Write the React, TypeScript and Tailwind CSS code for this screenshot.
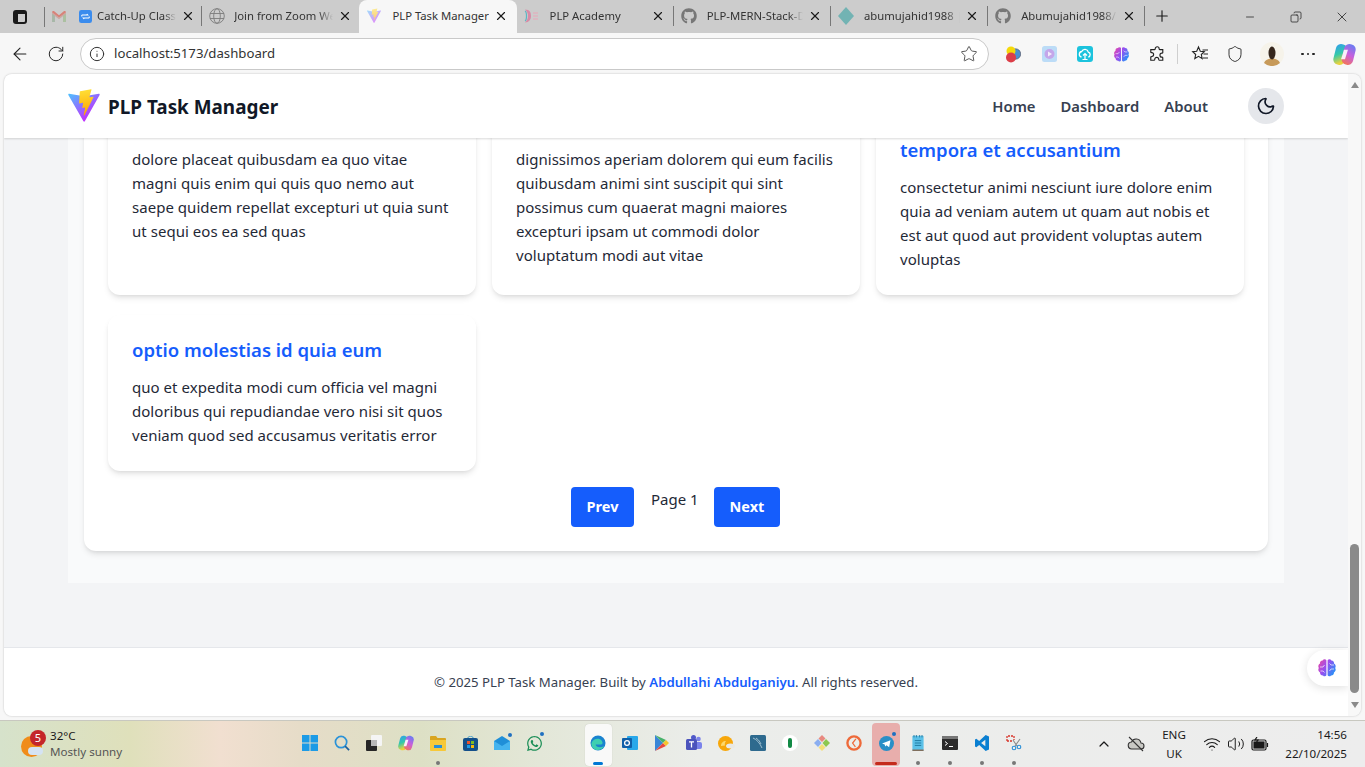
import { ArrowLeft, ChevronUp, Copy, Info, Minus, Moon, Plus, RotateCw, Shield, Star, Volume2, Wifi, X } from 'lucide-react';
import type { ReactNode } from 'react';
import { FaGithub, FaWhatsapp } from 'react-icons/fa';

const tabs = [
  { title: 'Catch-Up Class', icon: 'zoom' },
  { title: 'Join from Zoom Web', icon: 'globe' },
  { title: 'PLP Task Manager', icon: 'vite', active: true },
  { title: 'PLP Academy', icon: 'plp' },
  { title: 'PLP-MERN-Stack-Dev', icon: 'github' },
  { title: 'abumujahid1988 | Dev', icon: 'diamond' },
  { title: 'Abumujahid1988/PLP', icon: 'github' },
];

const posts = [
  {
    title: 'magnam facilis autem',
    body: 'dolore placeat quibusdam ea quo vitae magni quis enim qui quis quo nemo aut saepe quidem repellat excepturi ut quia sunt ut sequi eos ea sed quas',
  },
  {
    title: 'dolorem dolore est ipsam',
    body: 'dignissimos aperiam dolorem qui eum facilis quibusdam animi sint suscipit qui sint possimus cum quaerat magni maiores excepturi ipsam ut commodi dolor voluptatum modi aut vitae',
  },
  {
    title: 'nesciunt iure omnis dolorem tempora et accusantium',
    body: 'consectetur animi nesciunt iure dolore enim quia ad veniam autem ut quam aut nobis et est aut quod aut provident voluptas autem voluptas',
  },
  {
    title: 'optio molestias id quia eum',
    body: 'quo et expedita modi cum officia vel magni doloribus qui repudiandae vero nisi sit quos veniam quod sed accusamus veritatis error',
  },
];

function ViteLogo({ size }: { size: number }) {
  return (
    <svg width={size} height={size} viewBox="0 0 32 32" className="shrink-0">
      <defs>
        <linearGradient id="viteA" x1="6" y1="33" x2="235" y2="344" gradientUnits="userSpaceOnUse" gradientTransform="scale(0.078)">
          <stop stopColor="#41D1FF" />
          <stop offset="1" stopColor="#BD34FE" />
        </linearGradient>
        <linearGradient id="viteB" x1="194" y1="8" x2="236" y2="292" gradientUnits="userSpaceOnUse" gradientTransform="scale(0.078)">
          <stop stopColor="#FFEA83" />
          <stop offset="0.08" stopColor="#FFDD35" />
          <stop offset="1" stopColor="#FFA800" />
        </linearGradient>
      </defs>
      <path
        fill="url(#viteA)"
        d="M29.8836 6.146L16.7418 29.6457c-.2714.4851-.9684.488-1.2439.0052L2.0956 6.1482c-.3-.5262.1499-1.1635.7461-1.057l13.156 2.3516a.7.7 0 0 0 .2549-.0005l12.8806-2.3477c.5942-.1083 1.0463.5241.7504 1.0512Z"
      />
      <path
        fill="url(#viteB)"
        d="M22.2644 1.0085L12.5396 2.9139a.3571.3571 0 0 0-.2879.3294l-.5982 10.1039a.3571.3571 0 0 0 .4365.3689l2.7076-.6248c.2533-.0585.4823.1647.4302.4196l-.8045 3.9393c-.0541.265.1947.4918.4536.4132l1.6724-.5081c.2593-.0787.5084.1486.4536.4138l-1.2784 6.1877c-.08.387.4348.598.6495.2662l.1434-.2215 7.925-15.8148c.1327-.2648-.0962-.5667-.387-.5106l-2.7871.5379c-.2619.0505-.4848-.1934-.4109-.4497l1.8191-6.3062c.074-.2567-.1497-.5009-.4121-.4494Z"
      />
    </svg>
  );
}

function BrainIcon({ size }: { size: number }) {
  return (
    <svg width={size} height={size} viewBox="0 0 20 20" className="shrink-0">
      <defs>
        <linearGradient id="brainG" x1="0" y1="0" x2="1" y2="0.6">
          <stop stopColor="#f0489f" />
          <stop offset="0.5" stopColor="#9a4df0" />
          <stop offset="1" stopColor="#2f8df7" />
        </linearGradient>
      </defs>
      <path
        fill="url(#brainG)"
        d="M9.4 2.2C8.6 1 6.4 1 5.600 2.400 3.800 2.400 2.600 4 3 5.600 1.400 6.400.8 8.600 1.800 10c-1 1.600-.4 3.600 1.200 4.400 0 1.800 1.400 3.200 3 3 .8 1.200 2.800 1.200 3.400-.2V2.200Zm1.200 0c.8-1.200 3-1.200 3.800.2 1.800 0 3 1.600 2.600 3.200 1.600.8 2.200 3 1.200 4.400 1 1.600.4 3.600-1.200 4.400 0 1.800-1.400 3.200-3 3-.8 1.200-2.800 1.200-3.400-.2V2.200Z"
      />
      <path
        d="M3 9h3l1.500-2M3.500 13H6l1.500 1.500M12.500 5.500 14 7h3M17 11h-3l-1.500 2"
        fill="none"
        stroke="#fff"
        strokeWidth="0.9"
        opacity="0.75"
      />
    </svg>
  );
}

function CopilotIcon({ size, id }: { size: number; id: string }) {
  return (
    <svg width={size} height={size} viewBox="0 0 22 22" className="shrink-0">
      <defs>
        <linearGradient id={`${id}A`} x1="0" y1="0" x2="0.4" y2="1">
          <stop stopColor="#2f9af2" />
          <stop offset="0.55" stopColor="#35c9a8" />
          <stop offset="1" stopColor="#e9d23d" />
        </linearGradient>
        <linearGradient id={`${id}B`} x1="0.6" y1="0" x2="0.4" y2="1">
          <stop stopColor="#6a7cf2" />
          <stop offset="0.5" stopColor="#c95fdc" />
          <stop offset="1" stopColor="#f2765a" />
        </linearGradient>
      </defs>
      <rect x="1.500" y="1" width="11" height="20" rx="5" fill={`url(#${id}A)`} transform="rotate(14 7 11)" />
      <rect x="9.500" y="1" width="11" height="20" rx="5" fill={`url(#${id}B)`} transform="rotate(14 15 11)" />
      <path d="M10.500 6.500h3.800l-2.800 9H7.700Z" fill="#fff" opacity="0.9" />
    </svg>
  );
}

function TabIcon({ kind }: { kind: string }) {
  if (kind === 'zoom') {
    return (
      <svg width="13" height="13" viewBox="0 0 14 14" className="shrink-0">
        <rect width="14" height="14" rx="2.5" fill="#3b8ced" />
        <path d="M3 5.500h6.500l-1-1.200M11 8.500H4.500l1 1.200M3 5.500V7M11 8.500V7" fill="none" stroke="#fff" strokeWidth="1.100" />
      </svg>
    );
  }
  if (kind === 'globe') {
    return (
      <svg width="16" height="16" viewBox="0 0 16 16" fill="none" stroke="#7c7c7c" strokeWidth="0.9" className="shrink-0">
        <circle cx="8" cy="8" r="7.300" />
        <ellipse cx="8" cy="8" rx="3.300" ry="7.300" />
        <path d="M1 5.500h14M1 10.500h14" />
      </svg>
    );
  }
  if (kind === 'vite') {
    return (
      <span className="shrink-0 opacity-50">
        <ViteLogo size={16} />
      </span>
    );
  }
  if (kind === 'plp') {
    return (
      <svg width="16" height="16" viewBox="0 0 16 16" className="shrink-0">
        <path d="M1 1.500c5 0 6 3 6 6.500s-2 6.500-6 6.500c2-2 3-4 3-6.500S3 3.500 1 1.500Z" fill="#d98aa6" />
        <path d="M1 3c2 1 2 9 0 10" fill="none" stroke="#5cb6c4" strokeWidth="1.200" />
        <path d="M9 5h5M9 8h5M9 11h5" stroke="#e9a6b8" strokeWidth="1.200" />
      </svg>
    );
  }
  if (kind === 'diamond') {
    return (
      <svg width="16" height="18" viewBox="0 0 16 18" className="shrink-0">
        <path d="M8 0l8 9-8 9-8-9Z" fill="#72b3b3" />
      </svg>
    );
  }
  return <FaGithub className="w-4 h-4 shrink-0 text-[#777777]" />;
}

function GmailIcon() {
  return (
    <svg width="14" height="11" viewBox="0 0 15 12" className="shrink-0">
      <path d="M0 1.500 7.500 7 15 1.500V12h-3V5.500L7.500 9 3 5.500V12H0Z" fill="#c9a8a4" />
      <path d="M0 1.500C0 .2 1.300-.3 2.300.4L7.500 4.500 12.700.4C13.700-.3 15 .2 15 1.500L7.500 7Z" fill="#d88278" />
      <path d="M0 3v9h3V5.500Z" fill="#a5b8a8" />
      <path d="M15 3v9h-3V5.500Z" fill="#a9c2a0" />
    </svg>
  );
}

function TabStrip() {
  return (
    <div className="h-[33px] bg-[#cccccc] flex items-end shrink-0">
      <div className="w-[45px] h-[33px] flex items-center shrink-0">
        <div className="ml-[13px] w-[14px] h-[14px] border-2 border-[#1a1a1a] rounded-[3px] flex flex-col">
          <div className="h-[2px] bg-[#1a1a1a]" />
          <div className="w-[3px] flex-1 bg-[#1a1a1a]" />
        </div>
        <div className="ml-[17px] w-px h-[20px] bg-[#777777]" />
      </div>
      {tabs.map((tab, i) => {
        const nextActive = tabs[i + 1]?.active;
        return (
          <div
            key={tab.title}
            className={`relative w-[157.200px] h-[33px] pb-px flex items-center shrink-0 ${
              tab.active ? 'bg-[#f7f7f7] rounded-t-[8px]' : ''
            }`}
          >
            <div className={`flex items-center pl-[7px] ${i === 0 ? 'gap-[13px]' : ''}`}>
              {i === 0 && <GmailIcon />}
              <TabIcon kind={tab.icon} />
            </div>
            <div
              className={`${i === 0 ? 'ml-[5px]' : i === 1 ? 'ml-[9px]' : 'ml-[10px]'} flex-1 overflow-hidden whitespace-nowrap text-[11.3px] leading-[16px] text-[#333333] ${
                tab.active ? '' : '[mask-image:linear-gradient(to_right,black_85%,transparent)]'
              }`}
            >
              {tab.title}
            </div>
            <X className={`w-[14px] h-[14px] ml-[5px] shrink-0 text-[#1a1a1a] ${i < 2 ? 'mr-[7px]' : 'mr-[9px]'}`} strokeWidth={2} />
            {!tab.active && !nextActive && <div className="absolute right-0 top-[6px] w-px h-[20px] bg-[#777777]" />}
          </div>
        );
      })}
      <div className="h-[33px] pb-px flex items-center ml-[8px]">
        <Plus className="w-[18px] h-[18px] text-[#1a1a1a]" strokeWidth={1.5} />
      </div>
      <div className="ml-auto h-[33px] flex items-center">
        <div className="w-[46px] flex justify-center">
          <Minus className="w-[12px] h-[12px] text-[#222222]" strokeWidth={1.5} />
        </div>
        <div className="w-[46px] flex justify-center">
          <Copy className="w-[12px] h-[12px] text-[#222222] -scale-x-100" strokeWidth={1.5} />
        </div>
        <div className="w-[46px] flex justify-center">
          <X className="w-[16px] h-[16px] text-[#222222]" strokeWidth={1.2} />
        </div>
      </div>
    </div>
  );
}

function ExtensionIcons() {
  return (
    <div className="flex items-center ml-[6px] shrink-0">
      <div className="w-9 flex justify-center">
        <svg width="16" height="17" viewBox="0 0 16 17">
          <circle cx="10.500" cy="8" r="5.200" fill="#4a90d0" stroke="#5a5a6a" strokeWidth="0.700" />
          <circle cx="6" cy="5" r="4.500" fill="#f5d90a" />
          <circle cx="6" cy="11.500" r="5" fill="#dc3e48" />
        </svg>
      </div>
      <div className="w-9 flex justify-center">
        <svg width="15" height="16" viewBox="0 0 15 16">
          <rect width="15" height="16" rx="2.500" fill="#bcdcf7" />
          <circle cx="7.500" cy="8" r="5" fill="#c4a6ea" />
          <path d="M6 5.500v5l4-2.500Z" fill="#f3ecfb" />
        </svg>
      </div>
      <div className="w-9 flex justify-center">
        <svg width="16" height="16" viewBox="0 0 16 16">
          <rect width="16" height="16" rx="3" fill="#1cc3dd" />
          <path d="M4.500 11a2.800 2.800 0 0 1 .2-5.500 3.500 3.500 0 0 1 6.600.5 2.600 2.600 0 0 1 0 5" fill="none" stroke="#fff" strokeWidth="1.300" />
          <path d="M8 13.500V7.500M6 9.500l2-2 2 2M5.500 13.500h5" fill="none" stroke="#fff" strokeWidth="1.200" />
        </svg>
      </div>
      <div className="w-9 flex justify-center">
        <BrainIcon size={17} />
      </div>
      <div className="w-9 flex justify-center">
        <svg width="16" height="16" viewBox="0 0 18 18" fill="none" stroke="#222222" strokeWidth="1.300">
          <path d="M7 3a2.200 2.200 0 0 1 4.400 0c0 .6 0 1 .6 1h3.500v3.500c0 .6-.4.600-1 .6a2.200 2.200 0 0 0 0 4.400c.6 0 1 0 1 .6V16h-4c-.6 0-.6-.4-.6-1a2.200 2.200 0 0 0-4.400 0c0 .6 0 1-.6 1H2v-3.500c0-.6.4-.6 1-.6a2.200 2.200 0 0 0 0-4.400c-.6 0-1 0-1-.6V4h4.400c.6 0 .6-.4.6-1Z" />
        </svg>
      </div>
      <div className="w-px h-[20px] bg-[#cfcfcf] mx-[2px]" />
      <div className="w-[40px] flex justify-center">
        <svg width="18" height="18" viewBox="0 0 18 18" fill="none" stroke="#222222" strokeWidth="1.100">
          <path d="M7.500 2 9.300 6.300l4 .4-3 2.800 .9 4.200-3.700-2.300-3.700 2.300 .9-4.200-3-2.800 4-.4Z" />
          <path d="M11.500 5H17M12.500 9H17M12 13h5" />
        </svg>
      </div>
      <div className="w-[30px] flex justify-center">
        <Shield className="w-[18px] h-[18px] text-[#222222]" strokeWidth={1.2} />
      </div>
      <div className="w-[44px] flex justify-center">
        <svg width="24" height="24" viewBox="0 0 24 24">
          <circle cx="12" cy="12" r="12" fill="#f6f3ea" />
          <path d="M4 21c1-3 4-4.500 8-4.500s7 1.500 8 4.500a12 12 0 0 1-16 0Z" fill="#c79a5a" />
          <ellipse cx="12" cy="11" rx="3.500" ry="6.500" fill="#35261c" />
        </svg>
      </div>
      <div className="w-[28px] flex justify-center gap-[3px]">
        <span className="w-[2.500px] h-[2.500px] rounded-full bg-[#222222]" />
        <span className="w-[2.500px] h-[2.500px] rounded-full bg-[#222222]" />
        <span className="w-[2.500px] h-[2.500px] rounded-full bg-[#222222]" />
      </div>
      <div className="w-[45px] flex justify-center">
        <CopilotIcon size={23} id="copTop" />
      </div>
    </div>
  );
}

function Toolbar() {
  return (
    <div className="h-[41px] pt-px bg-[#f7f7f7] flex items-center shrink-0">
      <div className="w-[40px] shrink-0 flex justify-center">
        <ArrowLeft className="w-[20px] h-[20px] text-[#222222]" strokeWidth={1.3} />
      </div>
      <div className="w-[32px] shrink-0 flex justify-center">
        <RotateCw className="w-[18px] h-[18px] text-[#222222]" strokeWidth={1.3} />
      </div>
      <div className="ml-[8px] w-[909px] shrink-0 h-[32px] rounded-full bg-white border border-[#c9c9c9] flex items-center pl-[8px] pr-[10px]">
        <Info className="w-[16px] h-[16px] text-[#333333]" strokeWidth={1.5} />
        <span className="ml-[9px] text-[13.2px] text-[#333333]">localhost:5173/dashboard</span>
        <Star className="ml-auto w-[18px] h-[18px] text-[#333333]" strokeWidth={1.1} />
      </div>
      <ExtensionIcons />
    </div>
  );
}

function Navbar() {
  return (
    <header className="absolute top-0 left-0 right-0 h-16 bg-white shadow-[0_1px_2px_rgba(0,0,0,0.15)] z-10">
      <div className="max-w-7xl mx-auto h-full px-8 flex items-center">
        <div className="-ml-[2px]">
          <ViteLogo size={36} />
        </div>
        <span className="ml-[6px] mt-[2px] text-[18.900px] font-bold text-[#111827]">PLP Task Manager</span>
        <nav className="ml-auto flex items-center gap-[25px] text-[14.800px] font-semibold text-[#374151]">
          <span className="mt-[1px]">Home</span>
          <span className="mt-[1px]">Dashboard</span>
          <span className="mt-[1px]">About</span>
          <button className="ml-[15px] w-9 h-9 rounded-full bg-[#e5e7eb] flex items-center justify-center">
            <Moon className="w-5 h-5 text-[#111827]" strokeWidth={2} />
          </button>
        </nav>
      </div>
    </header>
  );
}

function PostCard({ title, body }: { title: string; body: string }) {
  return (
    <div className="bg-white rounded-xl shadow-md pt-[21px] pb-6 px-6">
      <h3 className="text-[18.500px] leading-7 font-semibold text-[#155dfc] mb-[11px]">{title}</h3>
      <p className="text-[15px] tracking-[0.035px] leading-6 text-[#1f2937]">{body}</p>
    </div>
  );
}

function Page() {
  return (
    <div className="relative flex-1 mx-[4px] rounded-lg bg-[#f3f4f6] overflow-hidden flex shadow-[0_0_2px_rgba(0,0,0,0.25)]">
      <div className="relative flex-1 overflow-hidden flex flex-col">
        <Navbar />
        <main className="max-w-7xl w-full mx-auto px-8 shrink-0">
          <div className="bg-[#f9fafb] px-4 pb-8">
            <div className="bg-white rounded-xl px-6 pb-6 pt-[13px] shadow-md">
              <div className="grid grid-cols-3 gap-x-4 gap-y-5">
                {posts.map((post) => (
                  <PostCard key={post.title} {...post} />
                ))}
              </div>
              <div className="flex justify-center items-start gap-4 mt-4 pr-px">
                <button className="h-10 w-[63px] rounded bg-[#155dfc] text-white font-bold text-[14.500px]">Prev</button>
                <span className="ml-px w-[47px] whitespace-nowrap text-[15px] leading-6 text-[#1f2937]">Page 1</span>
                <button className="h-10 w-[66px] rounded bg-[#155dfc] text-white font-bold text-[14.500px]">Next</button>
              </div>
            </div>
          </div>
        </main>
        <footer className="mt-16 flex-1 pt-[2px] bg-white border-t border-[#e5e7eb] flex items-center justify-center text-[13.200px] text-[#374151]">
          <span>
            © 2025 PLP Task Manager. Built by <span className="font-semibold text-[#155dfc]">Abdullahi Abdulganiyu</span>. All rights reserved.
          </span>
        </footer>
        <div className="absolute right-0 bottom-[30px] w-[41px] h-[36px] bg-white rounded-l-full shadow-[0_2px_10px_rgba(0,0,0,0.12)] flex items-center pl-[10px]">
          <BrainIcon size={20} />
        </div>
      </div>
      <div className="w-[13px] bg-[#f8f8f8] flex flex-col items-center py-[8px] shrink-0">
        <div className="w-0 h-0 border-x-[4px] border-x-transparent border-b-[6px] border-b-[#8a8a8a]" />
        <div className="flex-1 flex flex-col justify-end w-full items-center pb-[9px]">
          <div className="w-[9px] h-[149px] rounded-full bg-[#8a8a8a]" />
        </div>
        <div className="w-0 h-0 border-x-[4px] border-x-transparent border-t-[6px] border-t-[#8a8a8a]" />
      </div>
    </div>
  );
}

function TaskIcon({ children, dot, active }: { children: ReactNode; dot?: boolean; active?: boolean }) {
  return (
    <div className="relative w-8 h-[45px] flex items-center justify-center">
      {active && <span className="absolute left-[2px] right-[2px] top-[1px] bottom-[1px] bg-[#e8aeac] rounded-[4px]" />}
      <span className="relative flex -mt-[2px]">{children}</span>
      {dot && <span className="absolute bottom-[2px] left-1/2 -ml-[2px] w-1 h-1 rounded-full bg-[#777777]" />}
      {active && <span className="absolute bottom-[2px] left-[5px] right-[5px] h-[3px] rounded-full bg-[#c42b1c]" />}
    </div>
  );
}

function Taskbar() {
  return (
    <div className="h-[47px] mt-[4px] shrink-0 border-t border-[#c8c8c0] flex items-center bg-[linear-gradient(to_right,#d6e2cb_0,#dfe0bb_130px,#f1dfd0_220px,#e6dcc8_300px,#dde0c5_420px,#e3e7d8_540px,#ebedea_700px,#ededed_100%)]">
      <div className="w-[294px] flex items-center pl-[21px] shrink-0">
        <div className="relative w-[24px] h-[28px] mr-[5px]">
          <div className="absolute left-0 top-[6px] w-[21px] h-[21px] rounded-full bg-[#f08c1a]" />
          <div className="absolute left-[7px] top-[17px] w-[15px] h-[8px] rounded-full bg-[#d5e3f3]" />
          <div className="absolute left-[9px] top-0 w-[16px] h-[16px] rounded-full bg-[#c4262a] text-white text-[11px] leading-[16px] text-center">
            5
          </div>
        </div>
        <div>
          <div className="text-[11.600px] leading-[16px] text-[#1a1a1a]">32°C</div>
          <div className="text-[11.600px] leading-[16px] text-[#555555]">Mostly sunny</div>
        </div>
      </div>
      <div className="flex items-center">
        <TaskIcon>
          <svg width="16" height="16" viewBox="0 0 16 16">
            <path d="M0 0h7.500v7.500H0ZM8.500 0H16v7.500H8.500ZM0 8.500h7.500V16H0ZM8.500 8.500H16V16H8.500Z" fill="#1d9be6" />
          </svg>
        </TaskIcon>
        <TaskIcon>
          <svg width="16" height="16" viewBox="0 0 17 17" fill="none" strokeWidth="1.800">
            <circle cx="7.500" cy="7.500" r="6" stroke="#2a92d8" />
            <path d="M11.800 11.800 16 16" stroke="#1c5f9c" />
          </svg>
        </TaskIcon>
        <TaskIcon>
          <svg width="16" height="16" viewBox="0 0 16 16">
            <rect x="5" width="11" height="11" rx="1" fill="#f5f5f5" />
            <rect y="5" width="11" height="11" rx="1" fill="#262626" />
            <rect x="5" y="5" width="6" height="6" fill="#b8b8b8" />
          </svg>
        </TaskIcon>
        <TaskIcon>
          <CopilotIcon size={16} id="copBar" />
        </TaskIcon>
        <TaskIcon dot>
          <svg width="16" height="15" viewBox="0 0 16 15">
            <path d="M0 1c0-.5.5-1 1-1h5l1.500 2H15c.5 0 1 .5 1 1v2H0Z" fill="#d9a520" />
            <path d="M0 4h16v10c0 .5-.5 1-1 1H1c-.5 0-1-.5-1-1Z" fill="#f7c93a" />
            <rect x="4" y="9" width="8" height="3" fill="#2a8fd8" />
          </svg>
        </TaskIcon>
        <TaskIcon>
          <svg width="15" height="15" viewBox="0 0 15 15">
            <rect y="2" width="15" height="13" rx="2" fill="#14508a" />
            <path d="M5 2c0-2.500 5-2.500 5 0" fill="none" stroke="#2a90c8" strokeWidth="1" />
            <rect x="4" y="5" width="3" height="3" fill="#e8532b" />
            <rect x="8" y="5" width="3" height="3" fill="#7fba22" />
            <rect x="4" y="9" width="3" height="3" fill="#1d9be6" />
            <rect x="8" y="9" width="3" height="3" fill="#f5b90a" />
          </svg>
        </TaskIcon>
        <TaskIcon>
          <svg width="16" height="14" viewBox="0 0 16 14">
            <path d="M0 5l8-5 8 5v9H0Z" fill="#1f8fd8" />
            <path d="M0 5l8 5 8-5v9H0Z" fill="#45b4ef" />
          </svg>
          <span className="absolute -top-[3px] -right-[2px] w-[4px] h-[4px] rounded-full bg-[#1f70c1]" />
        </TaskIcon>
        <TaskIcon>
          <FaWhatsapp className="w-[17px] h-[17px] text-[#1d8f58]" />
          <span className="absolute -top-[3px] -right-[1px] w-[4px] h-[4px] rounded-full bg-[#1f70c1]" />
        </TaskIcon>
      </div>
      <div className="w-8" />
      <div className="flex items-center">
        <div className="relative w-8 h-[45px] flex items-center justify-center">
          <span className="absolute left-[3px] right-[2px] top-[2px] bottom-[1px] bg-[#f9f9f8] rounded-[4px] shadow-[0_0_1px_rgba(0,0,0,0.2)]" />
          <span className="relative flex -mt-[2px]">
            <svg width="16" height="16" viewBox="0 0 17 17">
              <circle cx="8.500" cy="8.500" r="8" fill="#1a83cf" />
              <path d="M1.500 9c1-5 8-6.500 11-3 1.500 2 1 4-1 4H6c0 2.500 4 4 9 2-2 4-8 5-11 2.500C2.500 13.500 1.500 11.500 1.500 9Z" fill="#3ecfb0" />
            </svg>
          </span>
          <span className="absolute bottom-[2px] left-[11px] w-[10px] h-[3px] rounded-full bg-[#0078d4]" />
        </div>
        <TaskIcon>
          <svg width="16" height="14" viewBox="0 0 16 14">
            <rect x="5" width="11" height="14" rx="1" fill="#28a8ea" />
            <rect y="2" width="10" height="10" rx="1" fill="#0f5fa8" />
            <circle cx="5" cy="7" r="2.400" fill="none" stroke="#fff" strokeWidth="1.300" />
          </svg>
        </TaskIcon>
        <TaskIcon>
          <svg width="14" height="16" viewBox="0 0 14 16">
            <path d="M0 0v16l8-8Z" fill="#3a86d8" />
            <path d="M0 0l8 8 3-3Z" fill="#48b26a" />
            <path d="M0 16l8-8 3 3Z" fill="#e8493f" />
            <path d="M11 5l3 3-3 3-3-3Z" fill="#f7c52d" />
          </svg>
        </TaskIcon>
        <TaskIcon>
          <svg width="16" height="16" viewBox="0 0 16 16">
            <circle cx="12.500" cy="4" r="2.300" fill="#7b83eb" />
            <rect x="9" y="7" width="7" height="7" rx="2" fill="#7b83eb" />
            <circle cx="7.500" cy="2.500" r="2.500" fill="#5059c9" />
            <rect x="0" y="4" width="11" height="11" rx="1.500" fill="#4b53bc" />
            <path d="M3 6.800h5M5.500 6.800v5.700" stroke="#fff" strokeWidth="1.300" />
          </svg>
        </TaskIcon>
        <TaskIcon>
          <svg width="17" height="15" viewBox="0 0 17 15">
            <circle cx="7.500" cy="7.500" r="7.500" fill="#f7a70a" />
            <path d="M3 10c0-3 2-5 5-5-1 1-1.500 3-1 4.500Z" fill="#fdd86a" />
            <ellipse cx="12.500" cy="10" rx="4.500" ry="2.500" fill="#e9e9e4" />
          </svg>
        </TaskIcon>
        <TaskIcon>
          <svg width="16" height="16" viewBox="0 0 16 16">
            <rect width="16" height="16" rx="1.500" fill="#2e6a8e" />
            <path d="M3 3c4 1.500 7 5.500 9 10M6 3c3 2 4 4 5 6" fill="none" stroke="#a9c6d6" strokeWidth="0.900" />
          </svg>
        </TaskIcon>
        <TaskIcon>
          <div className="w-[16px] h-[16px] rounded-full bg-white flex items-center justify-center">
            <div className="w-[4px] h-[10px] rounded-full bg-[#128a45]" />
          </div>
        </TaskIcon>
        <TaskIcon>
          <svg width="16" height="16" viewBox="0 0 16 16">
            <path d="M8 0l3.500 3.500L8 7 4.500 3.500Z" fill="#e88a80" />
            <path d="M12 4l4 4-4 4-3.500-4Z" fill="#8cc850" />
            <path d="M4 4l3.500 4L4 12 0 8Z" fill="#8aaef0" />
            <path d="M8 9l3.500 3.500L8 16l-3.500-3.500Z" fill="#f4e07a" />
          </svg>
        </TaskIcon>
        <TaskIcon>
          <svg width="16" height="16" viewBox="0 0 17 17" fill="none">
            <circle cx="8.500" cy="8.500" r="7" stroke="#ee6a3a" strokeWidth="2.500" />
            <path d="M10.500 4 7 8.500l3 4" stroke="#ee6a3a" strokeWidth="1.300" />
          </svg>
        </TaskIcon>
        <TaskIcon active>
          <svg width="15" height="15" viewBox="0 0 17 17">
            <circle cx="8.500" cy="8.500" r="8.500" fill="#2a8fc7" />
            <path d="M3.500 8.500 13 4.800l-1.500 8L8.500 10.500 7 12l-.5-2.500Z" fill="#fff" />
          </svg>
          <span className="absolute -top-[4px] -right-[2px] w-[4px] h-[4px] rounded-full bg-[#1f70c1]" />
        </TaskIcon>
        <TaskIcon dot>
          <svg width="12" height="16" viewBox="0 0 14 20">
            <rect y="1" width="14" height="19" rx="1" fill="#5cc1e8" />
            <path d="M2 0v3M5 0v3M9 0v3M12 0v3" stroke="#1d6f96" strokeWidth="1" />
            <path d="M3 7h8M3 10h8M3 13h8" stroke="#126a92" strokeWidth="1" />
            <path d="M0 19h14" stroke="#8a5a3a" strokeWidth="1.500" />
          </svg>
        </TaskIcon>
        <TaskIcon dot>
          <svg width="16" height="14" viewBox="0 0 16 14">
            <rect width="16" height="14" rx="1" fill="#2b2b2b" />
            <rect width="16" height="3" fill="#777777" />
            <path d="M3 5.500l2.500 2L3 9.500M7 10.500h4" fill="none" stroke="#fff" strokeWidth="1" />
          </svg>
        </TaskIcon>
        <TaskIcon dot>
          <svg width="16" height="16" viewBox="0 0 24 24">
            <path d="M17.500 0 7.800 9 3.500 5.700 1.500 6.700v10.600l2 1L7.800 15l9.700 9 5-2.400V2.400ZM17 7.200v9.600L10.600 12Z" fill="#0a7fd1" />
          </svg>
        </TaskIcon>
        <TaskIcon dot>
          <svg width="16" height="16" viewBox="0 0 16 16" fill="none">
            <path d="M1 6V1h7v4" stroke="#d8352a" strokeWidth="1.300" strokeDasharray="2 1" />
            <path d="M1 6h5" stroke="#d8352a" strokeWidth="1.300" strokeDasharray="2 1" />
            <path d="M7 5l4 6M14 4 9 11" stroke="#8a8a8a" strokeWidth="1.100" />
            <circle cx="8" cy="13" r="1.800" stroke="#2a8fd8" strokeWidth="1.100" />
            <circle cx="13" cy="12" r="1.800" stroke="#2a8fd8" strokeWidth="1.100" />
          </svg>
        </TaskIcon>
      </div>
      <div className="ml-auto flex items-center pr-[18px] text-[#1a1a1a]">
        <ChevronUp className="w-[16px] h-[16px]" strokeWidth={1.8} />
        <div className="w-[47px] flex justify-center">
          <svg width="18" height="18" viewBox="0 0 18 18" fill="none" stroke="#333333" strokeWidth="1.100">
            <path d="M5 14a3.500 3.500 0 0 1-.5-7 5 5 0 0 1 9.500 1 3 3 0 0 1 0 6Z" fill="#c8c8c4" />
            <path d="M2 2l14 14" />
          </svg>
        </div>
        <div className="w-[30px] text-center text-[11.600px] leading-[19px]">
          <div>ENG</div>
          <div>UK</div>
        </div>
        <div className="ml-[14px] flex items-center gap-[6px]">
          <Wifi className="w-[18px] h-[18px]" strokeWidth={1.5} />
          <Volume2 className="w-[18px] h-[18px]" strokeWidth={1.3} />
          <svg width="18" height="14" viewBox="0 0 18 14" fill="none" stroke="#1a1a1a" strokeWidth="1.200">
            <rect x="1" y="3" width="14" height="10" rx="1.500" />
            <rect x="3" y="5" width="10" height="6" fill="#1a1a1a" />
            <path d="M16.500 6v4M6 0 4 3h3L5 6" />
          </svg>
        </div>
        <div className="ml-[14px] w-[64px] text-right text-[11.600px] leading-[19px]">
          <div>14:56</div>
          <div>22/10/2025</div>
        </div>
      </div>
    </div>
  );
}

export default function App() {
  return (
    <div className="h-[767px] w-[1365px] overflow-hidden flex flex-col bg-[#f7f7f7] font-['Noto_Sans',sans-serif]">
      <TabStrip />
      <Toolbar />
      <Page />
      <Taskbar />
    </div>
  );
}
